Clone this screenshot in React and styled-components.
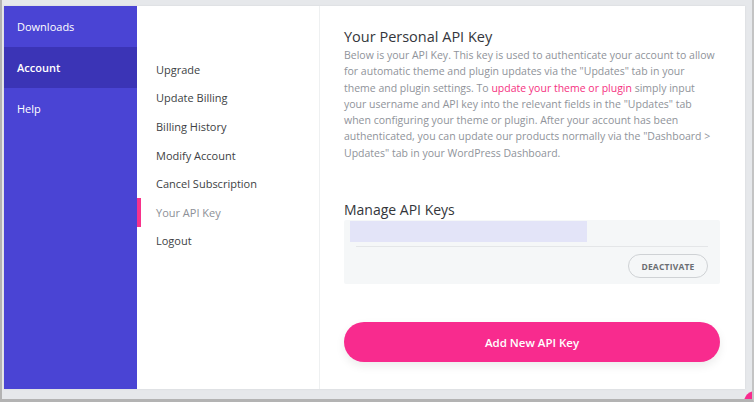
import React from "react";
import styled, { createGlobalStyle } from "styled-components";

const Global = createGlobalStyle`
  html, body { margin: 0; padding: 0; }
  body {
    width: 754px;
    height: 402px;
    overflow: hidden;
    background: #e6e8eb;
    font-family: "Open Sans", "Noto Sans", sans-serif;
  }
`;

const Frame = styled.div`
  box-sizing: border-box;
  position: relative;
  width: 754px;
  height: 402px;
  border-left: 2px solid #b3b3b3;
  border-bottom: 3px solid #b3b3b3;
  border-right: 2px solid #c4c4c4;
  background: #e6e8eb;
  padding: 6px 7px 10px 2px;
  overflow: hidden;
`;

const Card = styled.div`
  display: flex;
  height: 100%;
  background: #fff;
  box-shadow: 0 0 2px rgba(0, 0, 0, 0.08);
`;

const Sidebar = styled.nav`
  width: 133px;
  flex-shrink: 0;
  background: #4a44d4;
  display: flex;
  flex-direction: column;
`;

const SideItem = styled.div`
  height: 41px;
  display: flex;
  align-items: center;
  padding-left: 13px;
  font-size: 11px;
  font-weight: ${(p) => (p.$active ? 600 : 400)};
  color: #fff;
  background: ${(p) => (p.$active ? "#3b34b6" : "transparent")};
`;

const SubNav = styled.div`
  width: 182px;
  flex-shrink: 0;
  border-right: 1px solid #eef0f1;
  padding-top: 49px;
  display: flex;
  flex-direction: column;
`;

const SubItem = styled.div`
  position: relative;
  height: 28.6px;
  display: flex;
  align-items: center;
  padding-left: 19px;
  font-size: 11px;
  color: ${(p) => (p.$active ? "#8d9097" : "#3d3f44")};

  &::before {
    content: "";
    display: ${(p) => (p.$active ? "block" : "none")};
    position: absolute;
    left: 0;
    top: 0;
    width: 4px;
    height: 100%;
    background: #f7328b;
  }
`;

const Content = styled.main`
  flex: 1;
  padding: 21px 25px 0 24px;
  display: flex;
  flex-direction: column;
`;

const Heading = styled.h2`
  margin: 0;
  font-size: 14.5px;
  font-weight: 400;
  color: #34363b;
  line-height: 20px;
`;

const Para = styled.div`
  font-size: 10.5px;
  line-height: 16.3px;
  color: #8f939a;
`;

const Line = styled.div`
  white-space: nowrap;
`;

const Pink = styled.span`
  color: #f5317f;
`;

const SubHeading = styled(Heading)`
  font-size: 14px;
  margin-top: 39px;
`;

const KeyBox = styled.div`
  margin-top: 0;
  background: #f5f7f8;
  border-radius: 2px;
  padding: 1px 12px 6px 6px;
  display: flex;
  flex-direction: column;
`;

const KeyBar = styled.div`
  width: 237px;
  height: 21px;
  background: #e3e4f8;
`;

const Divider = styled.div`
  height: 1px;
  background: #e4e6e8;
  margin: 4px 0 7px 6px;
`;

const Actions = styled.div`
  display: flex;
  justify-content: flex-end;
`;

const Deactivate = styled.button`
  height: 24px;
  width: 80px;
  border-radius: 12px;
  border: 1px solid #cfd2d5;
  background: transparent;
  font-family: inherit;
  font-size: 8.5px;
  font-weight: 700;
  color: #6b6e73;
  letter-spacing: 0.2px;
`;

const AddButton = styled.button`
  margin-top: 38px;
  height: 40px;
  border: none;
  border-radius: 20px;
  background: #f82b8e;
  color: #fff;
  font-family: inherit;
  font-size: 11.5px;
  font-weight: 600;
  box-shadow: 0 4px 10px rgba(0, 0, 0, 0.08);
`;

const Corner = styled.div`
  position: absolute;
  right: -14px;
  bottom: -14px;
  width: 22px;
  height: 22px;
  border-radius: 50%;
  background: #f82b8e;
`;

const sideItems = ["Downloads", "Account", "Help"];
const subItems = [
  "Upgrade",
  "Update Billing",
  "Billing History",
  "Modify Account",
  "Cancel Subscription",
  "Your API Key",
  "Logout",
];

export default function App() {
  return (
    <>
      <Global />
      <Frame>
        <Card>
          <Sidebar>
            {sideItems.map((s) => (
              <SideItem key={s} $active={s === "Account"}>
                {s}
              </SideItem>
            ))}
          </Sidebar>
          <SubNav>
            {subItems.map((s) => (
              <SubItem key={s} $active={s === "Your API Key"}>
                {s}
              </SubItem>
            ))}
          </SubNav>
          <Content>
            <Heading>Your Personal API Key</Heading>
            <Para>
              <Line>Below is your API Key. This key is used to authenticate your account to allow</Line>
              <Line>for automatic theme and plugin updates via the "Updates" tab in your</Line>
              <Line>
                theme and plugin settings. To <Pink>update your theme or plugin</Pink> simply input
              </Line>
              <Line>your username and API key into the relevant fields in the "Updates" tab</Line>
              <Line>when configuring your theme or plugin. After your account has been</Line>
              <Line>authenticated, you can update our products normally via the "Dashboard &gt;</Line>
              <Line>Updates" tab in your WordPress Dashboard.</Line>
            </Para>
            <SubHeading>Manage API Keys</SubHeading>
            <KeyBox>
              <KeyBar />
              <Divider />
              <Actions>
                <Deactivate>DEACTIVATE</Deactivate>
              </Actions>
            </KeyBox>
            <AddButton>Add New API Key</AddButton>
          </Content>
        </Card>
        <Corner />
      </Frame>
    </>
  );
}
